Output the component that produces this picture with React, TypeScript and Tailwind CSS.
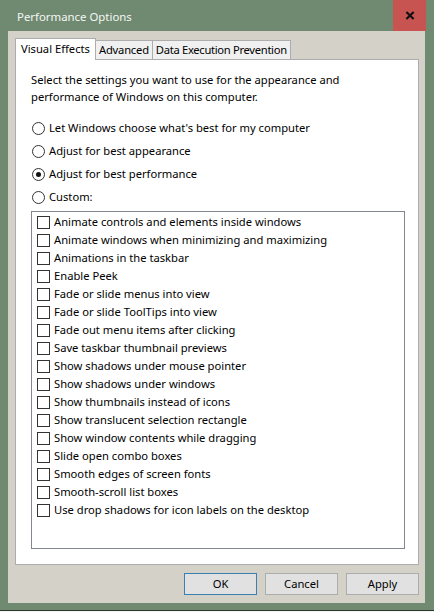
const effects = [
  'Animate controls and elements inside windows',
  'Animate windows when minimizing and maximizing',
  'Animations in the taskbar',
  'Enable Peek',
  'Fade or slide menus into view',
  'Fade or slide ToolTips into view',
  'Fade out menu items after clicking',
  'Save taskbar thumbnail previews',
  'Show shadows under mouse pointer',
  'Show shadows under windows',
  'Show thumbnails instead of icons',
  'Show translucent selection rectangle',
  'Show window contents while dragging',
  'Slide open combo boxes',
  'Smooth edges of screen fonts',
  'Smooth-scroll list boxes',
  'Use drop shadows for icon labels on the desktop',
]

const options = [
  { label: "Let Windows choose what's best for my computer", checked: false },
  { label: 'Adjust for best appearance', checked: false },
  { label: 'Adjust for best performance', checked: true },
  { label: 'Custom:', checked: false },
]

function Radio({ checked }: { checked: boolean }) {
  return (
    <span className="flex h-[13px] w-[13px] shrink-0 items-center justify-center rounded-full border border-[#333] bg-white">
      {checked && <span className="h-[5px] w-[5px] rounded-full bg-[#111]" />}
    </span>
  )
}

function Button({ label, primary }: { label: string; primary?: boolean }) {
  return (
    <button
      className={[
        'h-[22px] w-[73px] bg-[#e1e1e1] text-[11.2px] text-black',
        primary ? 'border border-[#3c7fb1]' : 'border border-[#adadad]',
      ].join(' ')}
    >
      {label}
    </button>
  )
}

export default function App() {
  return (
    <div
      className="flex h-[612px] w-[434px] flex-col bg-[#6f8a70] text-[11.2px] text-black"
      style={{ fontFamily: '"Noto Sans", "Open Sans", sans-serif' }}
    >
      {/* title bar */}
      <div className="flex h-[31px] shrink-0 items-start">
        <span className="mt-[8px] ml-[17px] flex-1 text-[11.4px] text-[#f4f6f4]">Performance Options</span>
        <button className="mr-[8px] flex h-[31px] w-[33px] items-center justify-center bg-[#c75450]">
          <svg viewBox="0 0 10 10" className="h-[9px] w-[10px]" fill="none" stroke="#111" strokeWidth="2.4">
            <path d="M1 1l8 8M9 1l-8 8" />
          </svg>
        </button>
      </div>

      {/* body */}
      <div className="ml-[8px] mr-[9px] flex h-[572px] flex-col bg-[#d4d1c9] pt-[7px] pl-[7px] pr-[6px]">
        <div className="flex h-[21px] items-end">
          <div className="relative z-10 -mb-px flex h-[22px] items-center border border-b-0 border-[#adadad] bg-white px-[5px]">
            Visual Effects
          </div>
          <div className="flex h-[19px] items-center border border-b-0 border-l-0 border-[#adadad] bg-[#f0f0f0] px-[3px] tracking-[-0.2px]">
            Advanced
          </div>
          <div className="flex h-[19px] items-center border border-b-0 border-l-0 border-[#adadad] bg-[#f0f0f0] px-[3px] tracking-[-0.3px]">
            Data Execution Prevention
          </div>
        </div>

        <div className="flex h-[506px] flex-col border border-[#adadad] bg-white pt-[11px] pl-[15px]">
          <p className="leading-[17px]">
            Select the settings you want to use for the appearance and
            <br />
            performance of Windows on this computer.
          </p>
          <div className="mt-[15px] flex flex-col gap-[6px]">
            {options.map((o) => (
              <label key={o.label} className="flex h-[17px] items-center gap-[4px] pl-[1px]">
                <Radio checked={o.checked} />
                <span>{o.label}</span>
              </label>
            ))}
          </div>
          <div className="mt-[5px] h-[338px] w-[374px] border border-[#828790] pt-[1px] pl-[5px]">
            {effects.map((e) => (
              <label key={e} className="flex h-[18px] items-center gap-[4px]">
                <span className="h-[13px] w-[13px] shrink-0 border border-[#333] bg-white" />
                <span>{e}</span>
              </label>
            ))}
          </div>
        </div>

        <div className="mt-[8px] flex justify-end gap-[8px]">
          <Button label="OK" primary />
          <Button label="Cancel" />
          <Button label="Apply" />
        </div>
      </div>

      <div className="h-[7px]" />
      <div className="h-px bg-[#2e3a2f]" />
      <div className="h-px bg-[#f2f2f2]" />
    </div>
  )
}
